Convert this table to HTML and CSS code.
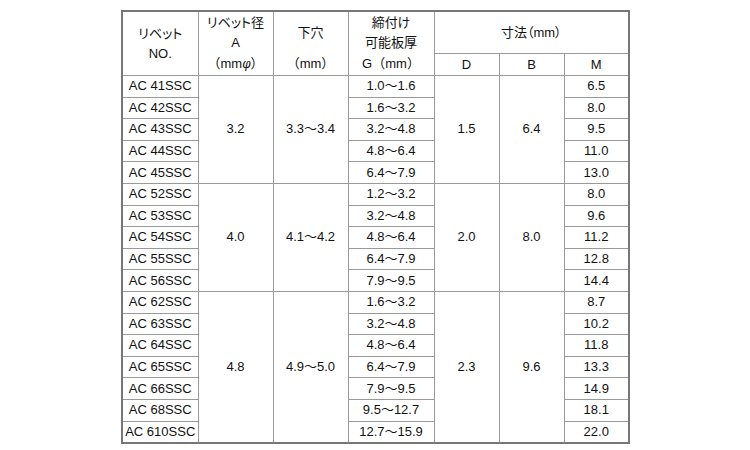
FILE: index.html
```html
<!DOCTYPE html>
<html lang="ja">
<head>
<meta charset="utf-8">
<link rel="stylesheet" href="styles.css">
</head>
<body>
<table class="spec">
  <colgroup>
    <col class="c-no"><col class="c-a"><col class="c-hole"><col class="c-g"><col class="c-d"><col class="c-b"><col class="c-m">
  </colgroup>
  <thead>
    <tr class="h1">
      <th rowspan="2" class="jp">リベット<br>NO.</th>
      <th class="top jp">リベット径<br>A</th>
      <th class="top jp">下穴</th>
      <th class="top jp">締付け<br>可能板厚</th>
      <th colspan="3" class="jp">寸法（mm）</th>
    </tr>
    <tr class="h2">
      <th class="bot">（mm<i>φ</i>）</th>
      <th class="bot">（mm）</th>
      <th class="bot">G（mm）</th>
      <th>D</th>
      <th>B</th>
      <th>M</th>
    </tr>
  </thead>
  <tbody>
    <tr><td>AC 41SSC</td><td rowspan="5">3.2</td><td rowspan="5">3.3～3.4</td><td>1.0～1.6</td><td rowspan="5">1.5</td><td rowspan="5">6.4</td><td>6.5</td></tr>
    <tr><td>AC 42SSC</td><td>1.6～3.2</td><td>8.0</td></tr>
    <tr><td>AC 43SSC</td><td>3.2～4.8</td><td>9.5</td></tr>
    <tr><td>AC 44SSC</td><td>4.8～6.4</td><td>11.0</td></tr>
    <tr><td>AC 45SSC</td><td>6.4～7.9</td><td>13.0</td></tr>
    <tr><td>AC 52SSC</td><td rowspan="5">4.0</td><td rowspan="5">4.1～4.2</td><td>1.2～3.2</td><td rowspan="5">2.0</td><td rowspan="5">8.0</td><td>8.0</td></tr>
    <tr><td>AC 53SSC</td><td>3.2～4.8</td><td>9.6</td></tr>
    <tr><td>AC 54SSC</td><td>4.8～6.4</td><td>11.2</td></tr>
    <tr><td>AC 55SSC</td><td>6.4～7.9</td><td>12.8</td></tr>
    <tr><td>AC 56SSC</td><td>7.9～9.5</td><td>14.4</td></tr>
    <tr><td>AC 62SSC</td><td rowspan="7">4.8</td><td rowspan="7">4.9～5.0</td><td>1.6～3.2</td><td rowspan="7">2.3</td><td rowspan="7">9.6</td><td>8.7</td></tr>
    <tr><td>AC 63SSC</td><td>3.2～4.8</td><td>10.2</td></tr>
    <tr><td>AC 64SSC</td><td>4.8～6.4</td><td>11.8</td></tr>
    <tr><td>AC 65SSC</td><td>6.4～7.9</td><td>13.3</td></tr>
    <tr><td>AC 66SSC</td><td>7.9～9.5</td><td>14.9</td></tr>
    <tr><td>AC 68SSC</td><td>9.5～12.7</td><td>18.1</td></tr>
    <tr><td>AC 610SSC</td><td>12.7～15.9</td><td>22.0</td></tr>
  </tbody>
</table>
</body>
</html>
```

FILE: styles.css
```css
html, body {
  margin: 0;
  padding: 0;
  background: #fff;
}
body {
  font-family: "Liberation Sans", "Noto Sans CJK JP", sans-serif;
  font-size: 13px;
  color: #111;
}
.spec {
  margin: 10px 0 0 121px;
  border-collapse: collapse;
  table-layout: fixed;
  width: 508px;
  border: 2px solid #777;
}
.c-no { width: 76px; }
.c-a { width: 75px; }
.c-hole { width: 75px; }
.c-g { width: 86px; }
.c-d { width: 65px; }
.c-b { width: 65px; }
.c-m { width: 65px; }

.spec th, .spec td {
  border: 1px solid #999;
  padding: 0;
  text-align: center;
  vertical-align: middle;
  font-weight: normal;
  line-height: 20px;
  white-space: nowrap;
}
.spec th.jp {
  font-feature-settings: "palt";
}
.h1 th {
  height: 41px;
}
.h2 th {
  height: 21px;
}
.h1 th.top {
  border-bottom: none;
}
.h2 th.bot {
  border-top: none;
}
.spec i {
  font-style: italic;
  font-family: "DejaVu Serif", serif;
  font-size: 12px;
}
.spec tbody td {
  height: 20.6px;
  line-height: 18px;
}
```
